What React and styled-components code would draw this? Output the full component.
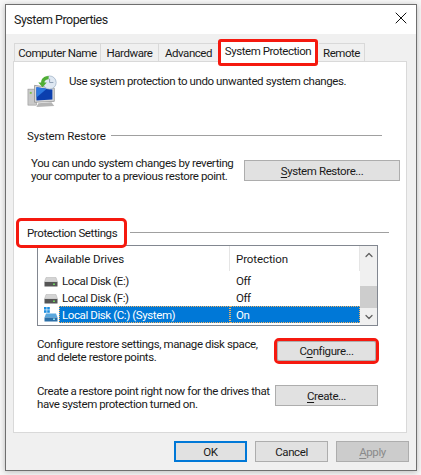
import * as React from "react";
import styled, { createGlobalStyle } from "styled-components";
import { X, ChevronUp, ChevronDown } from "lucide-react";

const GlobalStyle = createGlobalStyle`
  html, body {
    margin: 0;
    padding: 0;
    background: #f7f7f7;
  }
`;

const Page = styled.div`
  width: 421px;
  height: 475px;
  padding: 4px 4px 4px 5px;
  box-sizing: border-box;
  font-family: Roboto, "Noto Sans", sans-serif;
  font-size: 11.5px;
  letter-spacing: -0.4px;
  color: #1a1a1a;
  overflow: hidden;
`;

const Win = styled.div`
  height: 467px;
  box-sizing: border-box;
  border: 1px solid #6f6f6f;
  background: #f0f0f0;
  box-shadow: 0 1px 6px rgba(0, 0, 0, 0.25);
  display: flex;
  flex-direction: column;
`;

const TitleBar = styled.div`
  height: 29px;
  flex: none;
  background: #fff;
  display: flex;
  align-items: center;
  justify-content: space-between;
  padding: 0 5px 0 8px;
  font-size: 12.5px;
  letter-spacing: -0.5px;
  color: #222;

  & svg {
    margin-bottom: 3px;
  }
`;

const Tabs = styled.div`
  display: flex;
  align-items: flex-end;
  height: 27px;
  flex: none;
  padding-left: 8px;
  letter-spacing: -0.45px;
`;

const Tab = styled.div`
  box-sizing: border-box;
  width: ${(p) => p.$w}px;
  height: 18px;
  display: flex;
  align-items: center;
  justify-content: center;
  white-space: nowrap;
  border: 1px solid #d9d9d9;
  border-bottom: none;
  border-left-width: ${(p) => (p.$first ? 1 : 0)}px;
  margin-left: ${(p) => p.$gap || 0}px;
`;

const ActiveTab = styled.div`
  box-sizing: border-box;
  width: 100px;
  height: 27px;
  margin: 0 0 -5px -1px;
  padding-bottom: 3px;
  display: flex;
  align-items: center;
  justify-content: center;
  white-space: nowrap;
  background: #fff;
  border: 3px solid #f5190f;
  border-radius: 3px;
  position: relative;
  z-index: 2;
`;

const Panel = styled.div`
  box-sizing: border-box;
  margin: 0 9px 0 7px;
  height: 372px;
  flex: none;
  border: 1px solid #d9d9d9;
  background: #fff;
  display: flex;
  flex-direction: column;
  padding: 0 17px 0 13px;
`;

const IntroRow = styled.div`
  box-sizing: border-box;
  display: flex;
  align-items: flex-start;
  gap: 10px;
  height: 65px;
  padding-top: 11px;
  line-height: 17px;
  white-space: nowrap;

  & svg {
    margin-top: 2px;
    flex: none;
  }
`;

const GroupHead = styled.div`
  display: flex;
  align-items: center;
  gap: 5px;
  height: 17px;
  margin: ${(p) => p.$m};
`;

const GroupLabel = styled.span`
  white-space: nowrap;
  letter-spacing: -0.1px;
`;

const MarkedLabel = styled.span`
  white-space: nowrap;
  position: relative;
  z-index: 1;
  line-height: 12px;
  padding: 6px 7px 6px 8px;
  margin: -8px 1px -8px -8px;
  outline: 3px solid #f5190f;
  border-radius: 2px;
`;

const Rule = styled.div`
  flex: 1;
  height: 1px;
  background: #a0a0a0;
`;

const ActionRow = styled.div`
  display: flex;
  justify-content: space-between;
  align-items: flex-start;
  margin: ${(p) => p.$m};
`;

const Copy = styled.div`
  line-height: 13px;
  white-space: nowrap;
`;

const Button = styled.div`
  box-sizing: border-box;
  width: ${(p) => p.$w}px;
  height: 21px;
  flex: none;
  display: flex;
  align-items: center;
  justify-content: center;
  margin-top: ${(p) => p.$top || 0}px;
  background: ${(p) => (p.$disabled ? "#cccccc" : "#e1e1e1")};
  border: ${(p) => (p.$default ? "2px solid #0078d7" : "1px solid #adadad")};
  color: ${(p) => (p.$disabled ? "#8a8a8a" : "#1a1a1a")};

  & u {
    text-underline-offset: 2px;
  }
`;

const MarkedButton = styled(Button)`
  height: 20px;
  margin-right: 2px;
  outline: 3px solid #f5190f;
  border-radius: 2px;
`;

const DriveList = styled.div`
  box-sizing: border-box;
  height: 81px;
  width: 341px;
  margin: 4px 0 0 10px;
  border: 1px solid #828790;
  display: flex;
  flex: none;
`;

const DriveBody = styled.div`
  flex: 1;
  min-width: 0;
  display: flex;
  flex-direction: column;
`;

const Header = styled.div`
  display: grid;
  grid-template-columns: 192px 1fr;
  height: 25px;
  align-items: center;
  margin-bottom: 1px;
  letter-spacing: -0.1px;
`;

const HeaderCell = styled.div`
  height: 100%;
  display: flex;
  align-items: center;
  padding-left: ${(p) => p.$pad}px;
  border-right: 1px solid #e5e5e5;
  box-sizing: border-box;
`;

const Row = styled.div`
  display: grid;
  grid-template-columns: 192px 1fr;
  height: 17px;
  align-items: center;
`;

const DriveName = styled.div`
  display: flex;
  align-items: center;
  height: 100%;
  padding-left: 6px;
  gap: 1px;

  & svg {
    flex: none;
  }
`;

const NameText = styled.span`
  flex: 1;
  padding-left: 3px;
  height: 100%;
  display: flex;
  align-items: center;
  ${(p) => p.$selected && `background: #0078d7; color: #fff; outline: 1px dotted #f0b060; outline-offset: -1px;`}
`;

const StateText = styled.div`
  height: 100%;
  display: flex;
  align-items: center;
  padding-left: 6px;
  ${(p) => p.$selected && `background: #0078d7; color: #fff; outline: 1px dotted #f0b060; outline-offset: -1px;`}
`;

const Scrollbar = styled.div`
  width: 17px;
  flex: none;
  background: #f0f0f0;
  display: flex;
  flex-direction: column;
  color: #606060;
`;

const ScrollArrow = styled.div`
  height: 17px;
  flex: none;
  display: flex;
  align-items: center;
  justify-content: center;
`;

const ScrollTrack = styled.div`
  flex: 1;
  display: flex;
  align-items: flex-end;
`;

const Thumb = styled.div`
  width: 100%;
  height: 22px;
  background: #cdcdcd;
`;

const Footer = styled.div`
  flex: 1;
  display: flex;
  justify-content: flex-end;
  align-items: flex-start;
  gap: 8px;
  padding: 8px 7px 0 0;
`;

const DriveSvg = styled.svg`
  margin-top: 2px;
`;

const RestoreIcon = () => (
  <svg width="32" height="32" viewBox="0 0 32 34">
    <rect x="0" y="15" width="9" height="17" fill="#c9c9c9" stroke="#8f8f8f" strokeWidth="0.6" />
    <rect x="2" y="18" width="2" height="2" fill="#7ec04a" />
    <path d="M7 11 L28 14 L28 28 L7 29 Z" fill="#d8d8d8" stroke="#8d8d8d" strokeWidth="0.8" />
    <path d="M9 13 L26 15.5 L26 26 L9 27 Z" fill="#0b3fae" />
    <path d="M9 13 L20 14.6 L9 24 Z" fill="#2c78e0" />
    <path d="M11 30 L25 29 L28 33 L9 34 Z" fill="#b5b5b5" />
    <circle cx="23" cy="8" r="7" fill="#dfe8f2" stroke="#9fb2c6" strokeWidth="0.8" />
    <path d="M23 4 V8 H27" fill="none" stroke="#8a9bb0" strokeWidth="1" />
    <path d="M22 1 C17 1 14 4 14 8 L11 8 L15.5 13 L20 8 L17.5 8 C17.5 6 19.5 4.5 22 4.5 Z" fill="#4fae35" />
  </svg>
);

const DriveIcon = () => (
  <DriveSvg width="14" height="10" viewBox="0 0 14 10">
    <path d="M2 0.5 H12 L13.5 5 H0.5 Z" fill="#d4d4d4" stroke="#b0b0b0" strokeWidth="0.5" />
    <rect x="0.5" y="5" width="13" height="4.5" fill="#555" />
    <rect x="9" y="6.5" width="2" height="1.5" fill="#6ed060" />
  </DriveSvg>
);

const SystemDriveIcon = () => (
  <svg width="14" height="15" viewBox="0 0 14 15">
    <rect x="0" y="0" width="2.6" height="2.6" fill="#1f8fe0" />
    <rect x="3.2" y="0" width="2.6" height="2.6" fill="#1f8fe0" />
    <rect x="0" y="3.2" width="2.6" height="2.6" fill="#1f8fe0" />
    <rect x="3.2" y="3.2" width="2.6" height="2.6" fill="#1f8fe0" />
    <path d="M2 6.5 H12 L13.5 10.5 H0.5 Z" fill="#5aa7dc" />
    <rect x="0.5" y="10.5" width="13" height="4" fill="#2a6fa8" />
    <rect x="9" y="11.5" width="2" height="1.5" fill="#8fe0f0" />
  </svg>
);

const drives = [
  { name: "Local Disk (E:)", state: "Off" },
  { name: "Local Disk (F:)", state: "Off" },
  { name: "Local Disk (C:) (System)", state: "On", selected: true },
];

export default function App() {
  return (
    <Page>
      <GlobalStyle />
      <Win>
        <TitleBar>
          <span>System Properties</span>
          <X size={20} strokeWidth={1.2} color="#111" />
        </TitleBar>
        <Tabs>
          <Tab $first $w={87}>Computer Name</Tab>
          <Tab $w={58}>Hardware</Tab>
          <Tab $w={60}>Advanced</Tab>
          <ActiveTab>System Protection</ActiveTab>
          <Tab $w={46} $gap={1}>Remote</Tab>
        </Tabs>
        <Panel>
          <IntroRow>
            <RestoreIcon />
            <span>Use system protection to undo unwanted system changes.</span>
          </IntroRow>
          <GroupHead $m="0 7px 0 0">
            <GroupLabel>System Restore</GroupLabel>
            <Rule />
          </GroupHead>
          <ActionRow $m="13px -11px 0 4px">
            <Copy>
              You can undo system changes by reverting
              <br />
              your computer to a previous restore point.
            </Copy>
            <Button $w={156} $top={3}><span><u>S</u>ystem Restore...</span></Button>
          </ActionRow>
          <GroupHead $m="41px 0 0 0">
            <MarkedLabel>Protection Settings</MarkedLabel>
            <Rule />
          </GroupHead>
          <DriveList>
            <DriveBody>
              <Header>
                <HeaderCell $pad={7}>Available Drives</HeaderCell>
                <HeaderCell $pad={6}>Protection</HeaderCell>
              </Header>
              {drives.map((d) => (
                <Row key={d.name}>
                  <DriveName>
                    {d.selected ? <SystemDriveIcon /> : <DriveIcon />}
                    <NameText $selected={d.selected}>{d.name}</NameText>
                  </DriveName>
                  <StateText $selected={d.selected}>{d.state}</StateText>
                </Row>
              ))}
            </DriveBody>
            <Scrollbar>
              <ScrollArrow><ChevronUp size={12} strokeWidth={2.5} /></ScrollArrow>
              <ScrollTrack><Thumb /></ScrollTrack>
              <ScrollArrow><ChevronDown size={12} strokeWidth={2.5} /></ScrollArrow>
            </Scrollbar>
          </DriveList>
          <ActionRow $m="12px 11px 0 10px">
            <Copy>
              Configure restore settings, manage disk space,
              <br />
              and delete restore points.
            </Copy>
            <MarkedButton $w={99} $top={3}><span>C<u>o</u>nfigure...</span></MarkedButton>
          </ActionRow>
          <ActionRow $m="21px 11px 0 10px">
            <Copy>
              Create a restore point right now for the drives that
              <br />
              have system protection turned on.
            </Copy>
            <Button $w={103}><span><u>C</u>reate...</span></Button>
          </ActionRow>
        </Panel>
        <Footer>
          <Button $default $w={73}>OK</Button>
          <Button $w={73}>Cancel</Button>
          <Button $disabled $w={73}><span><u>A</u>pply</span></Button>
        </Footer>
      </Win>
    </Page>
  );
}
